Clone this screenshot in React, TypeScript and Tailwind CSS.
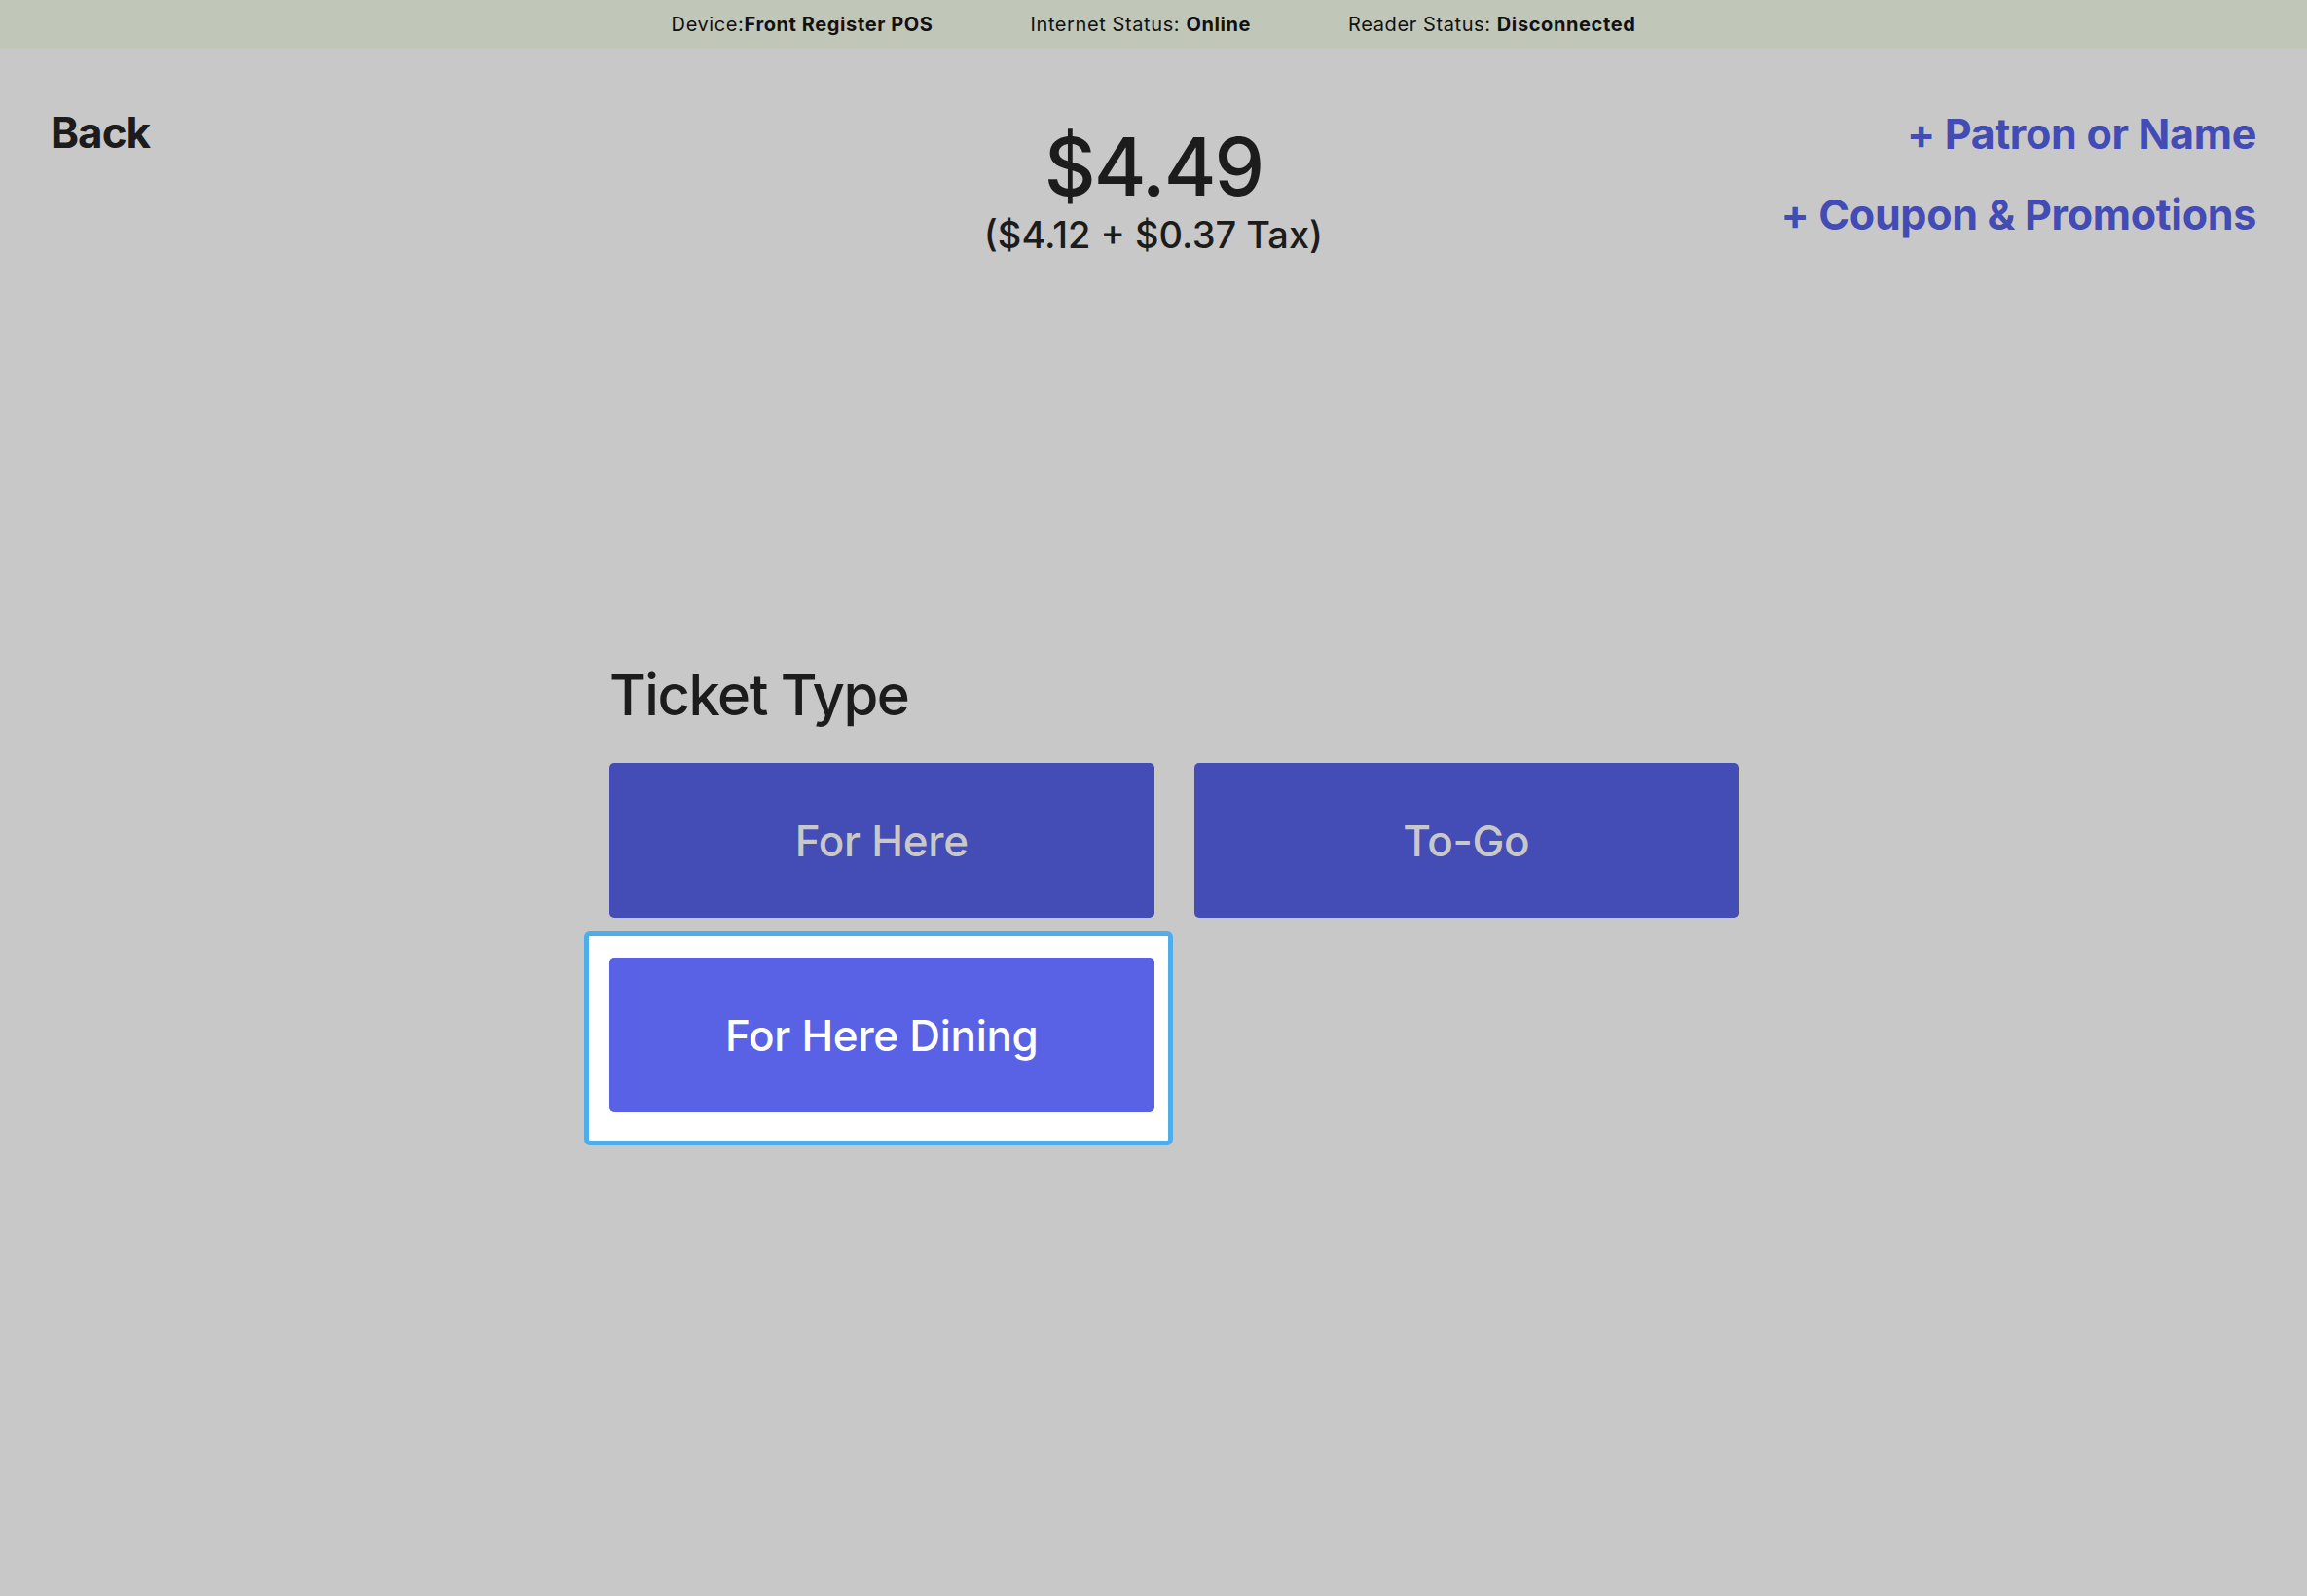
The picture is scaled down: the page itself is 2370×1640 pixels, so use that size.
import React from "react";

const ticketTypes = [
    { id: 1, label: "For Here" },
    { id: 2, label: "To-Go" },
    { id: 3, label: "For Here Dining" },
];

const StatusBar = () => {
    return (
        <div className="h-[50px] bg-[#c0c7b8] flex items-center justify-center gap-[100px] text-[20px] tracking-[0.6px] text-[#111]">
            <p>Device:<span className="font-bold">Front Register POS</span></p>
            <p>Internet Status: <span className="font-bold">Online</span></p>
            <p>Reader Status: <span className="font-bold">Disconnected</span></p>
        </div>
    );
};

const App = () => {
    const [selected, setSelected] = React.useState<number>(3);

    return (
        <div className="min-h-[1640px] bg-[#c8c8c8] text-[#1c1c1c]" style={{ fontFamily: "Inter, 'Noto Sans', sans-serif" }}>
            <StatusBar />

            <div className="grid grid-cols-3 px-[52px]">
                <div>
                    <button className="mt-[64px] text-[44px] leading-none font-bold tracking-[-1px]">Back</button>
                </div>
                <div className="text-center">
                    <p className="mt-[81px] text-[82px] leading-none font-medium tracking-[-2px]">$4.49</p>
                    <p className="mt-[9px] text-[38px] leading-none font-medium">($4.12 + $0.37 Tax)</p>
                </div>
                <div className="flex flex-col items-end text-[#434bb5] font-bold text-[43px] leading-none tracking-[-0.3px]">
                    <button className="mt-[66px]">+ Patron or Name</button>
                    <button className="mt-[40px]">+ Coupon &amp; Promotions</button>
                </div>
            </div>

            <div className="w-[1202px] mx-auto pl-[42px] mt-[425px]">
                <h2 className="text-[58px] leading-none font-medium tracking-[-1.5px]">Ticket Type</h2>
                <div className="mt-[41px] grid grid-cols-2 gap-[41px]">
                    {ticketTypes.map((t) => {
                        const active = selected === t.id;
                        return (
                            <div key={t.id} className="relative h-[159px]">
                                {active && (
                                    <div className="absolute -left-[26px] -right-[19px] -top-[27px] -bottom-[34px] bg-white border-[5px] border-[#4fadea] rounded-[6px]" />
                                )}
                                <button
                                    onClick={() => setSelected(t.id)}
                                    className={
                                        active
                                            ? "relative w-full h-full rounded-[5px] bg-[#5962e4] text-white text-[44px] font-medium tracking-[-0.3px]"
                                            : "relative w-full h-full rounded-[5px] bg-[#444cb5] text-[#c8c8c8] text-[44px] font-medium tracking-[-0.3px]"
                                    }
                                >
                                    {t.label}
                                </button>
                            </div>
                        );
                    })}
                </div>
            </div>
        </div>
    );
};

export default App;
